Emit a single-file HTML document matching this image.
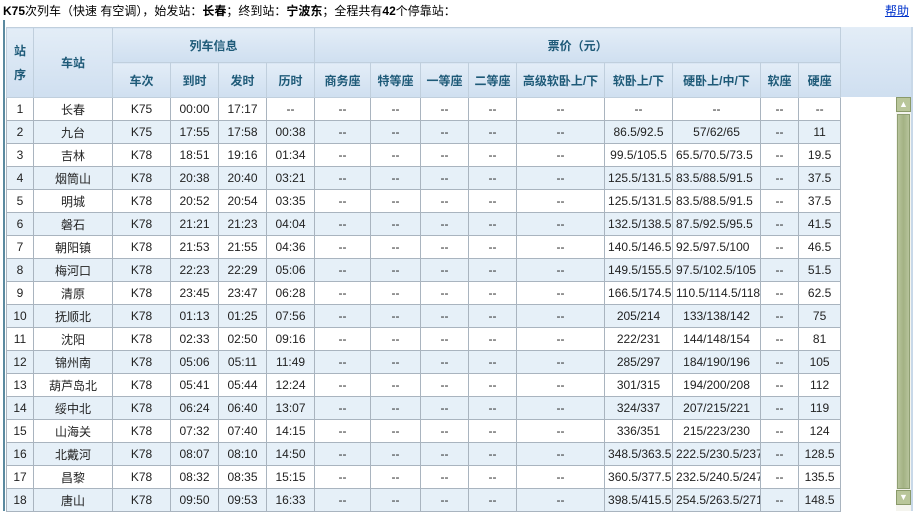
<!DOCTYPE html>
<html><head><meta charset="utf-8"><style>
body{margin:0;width:913px;height:511px;overflow:hidden;background:#fff;font-family:"Liberation Sans","Noto Sans CJK SC","WenQuanYi Zen Hei",sans-serif;font-size:12px;position:relative}
.title{position:absolute;left:3px;top:2px;font-size:12px;color:#000;white-space:nowrap}
.help{position:absolute;right:4px;top:2px;color:#0033cc;text-decoration:underline}
.outl{position:absolute;left:3px;top:20px;width:2px;height:491px;background:#5b8aa0}
.hbg{position:absolute;left:6px;top:27px;width:907px;height:70px;background:linear-gradient(#e3edf7,#cfdff0)}
table{position:absolute;left:6px;top:27px;border-collapse:collapse;table-layout:fixed;width:834px}
td,th{border:1px solid #a9b4bf;text-align:center;padding:0;white-space:nowrap;overflow:hidden}
th{color:#1e5a78;font-weight:bold;height:34px;background:linear-gradient(#e3edf7,#cfdff0);border-color:#c0cfdd}
td{height:22px;color:#222}
td.l{text-align:left;padding-left:3px}
tr.e td{background:#e6f0f8}
.sb{position:absolute;left:896px;top:97px;width:15px;height:414px;background:#f4f4ee}
.btn{position:absolute;left:0;width:15px;height:15px;background:#b9c69a;border:1px solid #8a9a6a;box-sizing:border-box;color:#fff;font-size:9px;line-height:13px;text-align:center}
.th{position:absolute;left:1px;top:17px;width:13px;height:375px;background:linear-gradient(90deg,#b8c49c,#a3b283,#b8c49c);border:1px solid #8f9f72;box-sizing:border-box}
.rl{position:absolute;left:911px;top:27px;width:2px;height:484px;background:#c8d8e8}
</style></head><body>
<div class="title"><b>K75</b>次列车（快速 有空调），始发站：<b>长春</b>；终到站：<b>宁波东</b>；全程共有<b>42</b>个停靠站：</div>
<a class="help">帮助</a>
<div class="outl"></div>
<div class="hbg"></div>
<table>
<colgroup><col style="width:27px"><col style="width:79px"><col style="width:58px"><col style="width:48px"><col style="width:48px"><col style="width:48px"><col style="width:56px"><col style="width:50px"><col style="width:48px"><col style="width:48px"><col style="width:88px"><col style="width:68px"><col style="width:88px"><col style="width:38px"><col style="width:42px"></colgroup>
<tr><th rowspan="2" style="line-height:24px">站<br>序</th><th rowspan="2">车站</th><th colspan="4">列车信息</th><th colspan="9">票价（元）</th></tr>
<tr><th>车次</th><th>到时</th><th>发时</th><th>历时</th><th>商务座</th><th>特等座</th><th>一等座</th><th>二等座</th><th>高级软卧上/下</th><th>软卧上/下</th><th>硬卧上/中/下</th><th>软座</th><th>硬座</th></tr>
<tr><td>1</td><td>长春</td><td>K75</td><td>00:00</td><td>17:17</td><td>--</td><td>--</td><td>--</td><td>--</td><td>--</td><td>--</td><td>--</td><td>--</td><td>--</td><td>--</td></tr>
<tr class="e"><td>2</td><td>九台</td><td>K75</td><td>17:55</td><td>17:58</td><td>00:38</td><td>--</td><td>--</td><td>--</td><td>--</td><td>--</td><td>86.5/92.5</td><td>57/62/65</td><td>--</td><td>11</td></tr>
<tr><td>3</td><td>吉林</td><td>K78</td><td>18:51</td><td>19:16</td><td>01:34</td><td>--</td><td>--</td><td>--</td><td>--</td><td>--</td><td>99.5/105.5</td><td class="l">65.5/70.5/73.5</td><td>--</td><td>19.5</td></tr>
<tr class="e"><td>4</td><td>烟筒山</td><td>K78</td><td>20:38</td><td>20:40</td><td>03:21</td><td>--</td><td>--</td><td>--</td><td>--</td><td>--</td><td class="l">125.5/131.5</td><td class="l">83.5/88.5/91.5</td><td>--</td><td>37.5</td></tr>
<tr><td>5</td><td>明城</td><td>K78</td><td>20:52</td><td>20:54</td><td>03:35</td><td>--</td><td>--</td><td>--</td><td>--</td><td>--</td><td class="l">125.5/131.5</td><td class="l">83.5/88.5/91.5</td><td>--</td><td>37.5</td></tr>
<tr class="e"><td>6</td><td>磐石</td><td>K78</td><td>21:21</td><td>21:23</td><td>04:04</td><td>--</td><td>--</td><td>--</td><td>--</td><td>--</td><td class="l">132.5/138.5</td><td class="l">87.5/92.5/95.5</td><td>--</td><td>41.5</td></tr>
<tr><td>7</td><td>朝阳镇</td><td>K78</td><td>21:53</td><td>21:55</td><td>04:36</td><td>--</td><td>--</td><td>--</td><td>--</td><td>--</td><td class="l">140.5/146.5</td><td class="l">92.5/97.5/100</td><td>--</td><td>46.5</td></tr>
<tr class="e"><td>8</td><td>梅河口</td><td>K78</td><td>22:23</td><td>22:29</td><td>05:06</td><td>--</td><td>--</td><td>--</td><td>--</td><td>--</td><td class="l">149.5/155.5</td><td class="l">97.5/102.5/105</td><td>--</td><td>51.5</td></tr>
<tr><td>9</td><td>清原</td><td>K78</td><td>23:45</td><td>23:47</td><td>06:28</td><td>--</td><td>--</td><td>--</td><td>--</td><td>--</td><td class="l">166.5/174.5</td><td class="l">110.5/114.5/118</td><td>--</td><td>62.5</td></tr>
<tr class="e"><td>10</td><td>抚顺北</td><td>K78</td><td>01:13</td><td>01:25</td><td>07:56</td><td>--</td><td>--</td><td>--</td><td>--</td><td>--</td><td>205/214</td><td>133/138/142</td><td>--</td><td>75</td></tr>
<tr><td>11</td><td>沈阳</td><td>K78</td><td>02:33</td><td>02:50</td><td>09:16</td><td>--</td><td>--</td><td>--</td><td>--</td><td>--</td><td>222/231</td><td>144/148/154</td><td>--</td><td>81</td></tr>
<tr class="e"><td>12</td><td>锦州南</td><td>K78</td><td>05:06</td><td>05:11</td><td>11:49</td><td>--</td><td>--</td><td>--</td><td>--</td><td>--</td><td>285/297</td><td>184/190/196</td><td>--</td><td>105</td></tr>
<tr><td>13</td><td>葫芦岛北</td><td>K78</td><td>05:41</td><td>05:44</td><td>12:24</td><td>--</td><td>--</td><td>--</td><td>--</td><td>--</td><td>301/315</td><td>194/200/208</td><td>--</td><td>112</td></tr>
<tr class="e"><td>14</td><td>绥中北</td><td>K78</td><td>06:24</td><td>06:40</td><td>13:07</td><td>--</td><td>--</td><td>--</td><td>--</td><td>--</td><td>324/337</td><td>207/215/221</td><td>--</td><td>119</td></tr>
<tr><td>15</td><td>山海关</td><td>K78</td><td>07:32</td><td>07:40</td><td>14:15</td><td>--</td><td>--</td><td>--</td><td>--</td><td>--</td><td>336/351</td><td>215/223/230</td><td>--</td><td>124</td></tr>
<tr class="e"><td>16</td><td>北戴河</td><td>K78</td><td>08:07</td><td>08:10</td><td>14:50</td><td>--</td><td>--</td><td>--</td><td>--</td><td>--</td><td class="l">348.5/363.5</td><td class="l">222.5/230.5/237</td><td>--</td><td>128.5</td></tr>
<tr><td>17</td><td>昌黎</td><td>K78</td><td>08:32</td><td>08:35</td><td>15:15</td><td>--</td><td>--</td><td>--</td><td>--</td><td>--</td><td class="l">360.5/377.5</td><td class="l">232.5/240.5/247</td><td>--</td><td>135.5</td></tr>
<tr class="e"><td>18</td><td>唐山</td><td>K78</td><td>09:50</td><td>09:53</td><td>16:33</td><td>--</td><td>--</td><td>--</td><td>--</td><td>--</td><td class="l">398.5/415.5</td><td class="l">254.5/263.5/271</td><td>--</td><td>148.5</td></tr>
</table>
<div class="rl"></div>
<div class="sb"><div class="btn" style="top:0">▲</div><div class="th"></div><div class="btn" style="top:393px">▼</div></div>
</body></html>
